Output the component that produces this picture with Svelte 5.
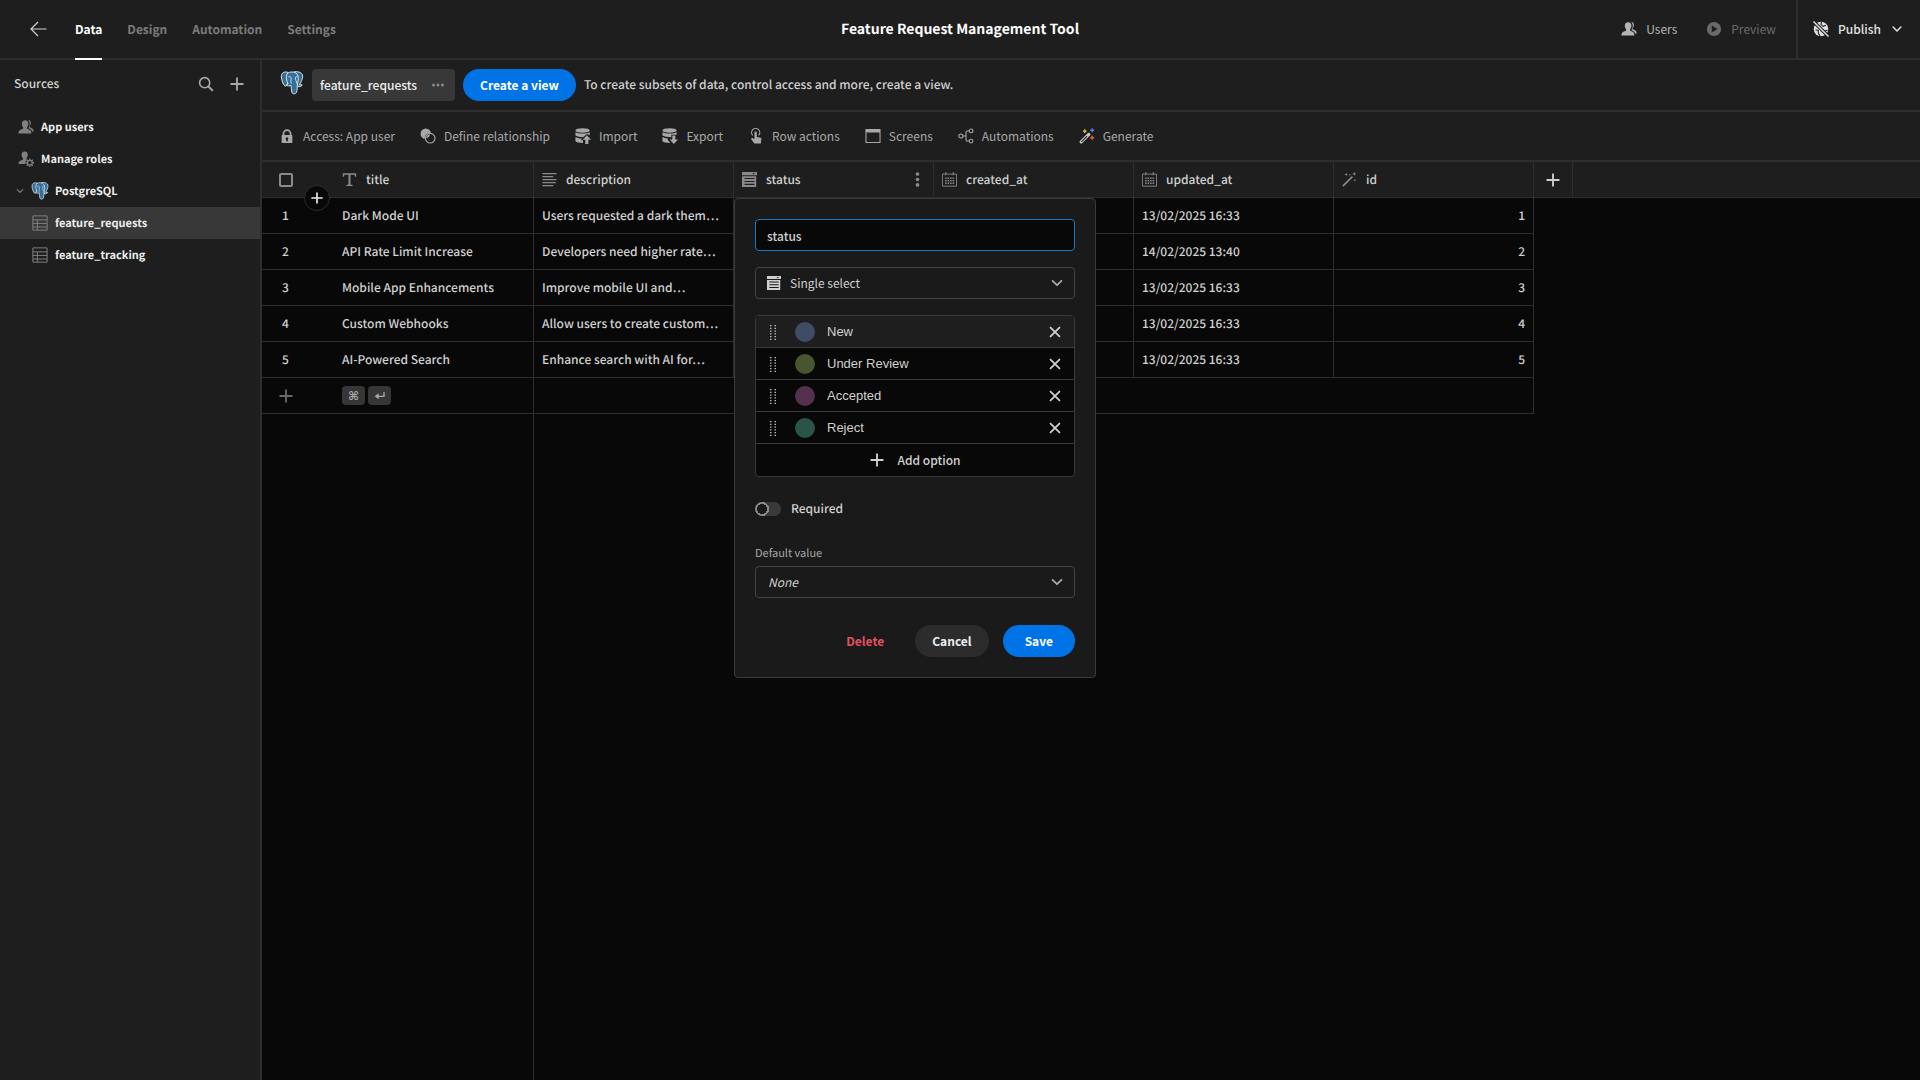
<script lang="ts">
  interface Option {
    name: string;
    color: string;
  }

  const icons: Record<string, string> = {
    back: '<path d="M2 9H17.5M9 2L2 9L9 16" fill="none" stroke="currentColor" stroke-width="1.2"/>',
    search: '<circle cx="7.5" cy="7.5" r="5.7" fill="none" stroke="currentColor" stroke-width="1.8"/><path d="M11.5 11.5L16.7 16.7" stroke="currentColor" stroke-width="2.2"/>',
    plus: '<path d="M9 2.5V15.5M2.5 9H15.5" stroke="currentColor" stroke-width="2.1" stroke-linecap="round"/>',
    close: '<path d="M4 4L14 14M14 4L4 14" stroke="currentColor" stroke-width="2" stroke-linecap="round"/>',
    chevron: '<path d="M4 6.5L9 11.5L14 6.5" fill="none" stroke="currentColor" stroke-width="2" stroke-linecap="round" stroke-linejoin="round"/>',
    dots: '<circle cx="4" cy="9" r="1.7"/><circle cx="9" cy="9" r="1.7"/><circle cx="14" cy="9" r="1.7"/>',
    dotsVertical: '<circle cx="9" cy="2.5" r="2.2"/><circle cx="9" cy="9" r="2.2"/><circle cx="9" cy="15.5" r="2.2"/>',
    users: '<path d="M8 1.3c2.3 0 3.7 1.6 3.7 4 0 1.7-.7 3-1.5 3.9v1.3c0 .4.2.7.6.8 2.5.8 4.2 1.9 4.2 4.2v.8H.5v-.8c0-2.3 2-3.4 4.5-4.2.4-.1.7-.4.7-.8V9.2C4.9 8.3 4.3 7 4.3 5.3c0-2.4 1.4-4 3.7-4z"/><path d="M11.3.9c2 .1 3.2 1.6 3.2 3.7 0 1.5-.6 2.6-1.2 3.3v1c0 .4.2.6.5.7 2.2.7 3.8 1.9 3.9 4.4h-1.9c-.5-1.8-1.9-2.8-4-3.5v-.7c.8-1 1.4-2.5 1.4-4.3 0-1.9-.7-3.5-1.9-4.6z"/>',
    roles: '<path d="M7.5.5C9.9.5 11 2.1 11 4.3c0 1.7-.6 2.9-1.4 3.7v1.3c0 .4.1.6.3.8-1.3 1.2-1.8 2.6-1.6 4.4H.5c0-2.8 1.8-3.7 4.4-4.4.4-.1.6-.4.6-.8V8C4.7 7.2 4 6 4 4.3 4 2.1 5.2.5 7.5.5z"/><circle cx="13.3" cy="13.2" r="2.7" fill="none" stroke="currentColor" stroke-width="1.4"/><path d="M13.3 8.4v2M13.3 16v2M8.5 13.2h2M16 13.2h2M9.9 9.8l1.4 1.4M15.2 15.1l1.4 1.4M9.9 16.6l1.4-1.4M15.2 11.3l1.4-1.4" stroke="currentColor" stroke-width="1.5"/>',
    table: '<path d="M1 1h16v16H1zM1 5.5h16M1 9.5h16M1 13.5h16M6 5.5V17" fill="none" stroke="currentColor" stroke-width="1.1"/>',
    lock: '<path d="M14.5 8H14V6.5a5 5 0 0 0-10 0V8h-.5a.5.5 0 0 0-.5.5v8a.5.5 0 0 0 .5.5h11a.5.5 0 0 0 .5-.5v-8a.5.5 0 0 0-.5-.5zM6 6.5a3 3 0 0 1 6 0V8H6zm4 6.7V15H8v-1.8a1.5 1.5 0 1 1 2 0z" fill-rule="evenodd"/>',
    relationship: '<circle cx="6.5" cy="6.5" r="5.9"/><circle cx="11.5" cy="11.5" r="6.2" fill="#1e1e1e"/><circle cx="11.5" cy="11.5" r="5.4" fill="none" stroke="currentColor" stroke-width="1.3"/><path d="M11.3 6.9A5.2 5.2 0 0 1 6.9 11.3A5.2 5.2 0 0 1 11.3 6.9z"/>',
    import: '<ellipse cx="8.5" cy="2.8" rx="8" ry="2.6"/><path d="M.5 4.8c3.2 2 12.8 2 16 0v3.4l-3-1.5-4.5 3.7C6 10.4 2.5 9.7.5 8.5zM.5 10.2c1.5 1 3.5 1.4 5.5 1.6l2 .2-1.7 1.7H9v3.2C5 16.9 1.6 16.2.5 15z"/><path d="M13.3 8.2l4.7 5h-3V18h-3.4v-4.8h-3z"/>',
    export: '<ellipse cx="8.5" cy="2.8" rx="8" ry="2.6"/><path d="M.5 4.8c3.2 2 12.8 2 16 0v2.7h-6v2.9C6.5 10.4 2.5 9.7.5 8.5zM.5 10.2c1.5 1 3.5 1.4 6 1.6v1.7l3 3.3C5 16.9 1.6 16.2.5 15z"/><path d="M13.3 18l4.7-5h-3V8.5h-3.4V13h-3z"/>',
    tap: '<path d="M7.3 5.2c0-1.7 2.6-1.7 2.6 0V10l4.2 1c.8.2 1.1.7 1 1.5l-.7 5H7.2L3.8 13c-.9-1.3.7-2.5 1.8-1.5l1.7 1.2z"/><path d="M5.3 8.3A4.6 4.6 0 1 1 12 8.3" fill="none" stroke="currentColor" stroke-width="1.3"/>',
    screens: '<path d="M.5 1h17v16H.5zM1.7 5v10.8h14.6V5z" fill-rule="evenodd"/>',
    automations: '<g fill="none" stroke="currentColor" stroke-width="1.2"><circle cx="3.2" cy="9" r="2.3"/><circle cx="14.7" cy="3.3" r="2.1"/><circle cx="14.7" cy="14.7" r="2.1"/><path d="M5.5 9h3M12.6 3.3h-2.1q-1.5 0-1.5 1.5v8.4q0 1.5 1.5 1.5h2.1"/></g>',
    generate: '<path d="M2.5 15.7L11 7.2" stroke="#c8c8c8" stroke-width="3.6" stroke-linecap="round"/><path d="M2.7 15.5L9 9.2" stroke="#1e1e1e" stroke-width="1.2"/><path d="M6.5 1.5v4M4.5 3.5h4" stroke="#e8c33c" stroke-width="1.5"/><path d="M14.8.3v4.4M12.6 2.5h4.4" stroke="#5c7cfa" stroke-width="1.5"/><path d="M14.8 8.8v4.4M12.6 11h4.4" stroke="#f0563a" stroke-width="1.8"/>',
    text: '<path d="M1 1.5h16v4.3h-1.3L15 3.3h-4.8v11.8l2.5.5v1.2H5.3v-1.2l2.5-.5V3.3H3l-.7 2.5H1z"/>',
    longText: '<path d="M.5 1.8h17M.5 5.4h13M.5 9h17M.5 12.6h16M.5 16.2h13" stroke="currentColor" stroke-width="1.5"/>',
    select: '<path d="M0 0h18v4H0zM12.5 1.2L14 3l1.5-1.8z" fill-rule="evenodd"/><path d="M0 5h17v13H0zM3 7.2v1.3h12V7.2zM3 10.7V12h12v-1.3zM3 14.2v1.3h12v-1.3z" fill-rule="evenodd"/>',
    calendar: '<path d="M.5 2.5h17V17H.5zM4.5 0v4M13.5 0v4" fill="none" stroke="currentColor" stroke-width="1.1"/><path d="M3.7 7.5h11M3.7 10.5h11M3.7 13.5h11" stroke="currentColor" stroke-width="1.8" stroke-dasharray="1.8 1.2"/>',
    wand: '<path d="M1 17L12.5 5.5" stroke="currentColor" stroke-width="1.9"/><path d="M5 1l.6 1.5 1.5.6-1.5.6L5 5.2l-.6-1.5-1.5-.6 1.5-.6zM14.8 0l.7 1.6 1.6.7-1.6.7-.7 1.6-.7-1.6-1.6-.7 1.6-.7zM15.5 8l.5 1.2 1.2.5-1.2.5-.5 1.2-.5-1.2-1.2-.5 1.2-.5z"/><circle cx="9.5" cy="3.3" r=".8"/>',
    play: '<path d="M9 1a8 8 0 1 0 0 16A8 8 0 0 0 9 1zM6.5 5l6.5 4-6.5 4z" fill-rule="evenodd"/>',
    globeOff: '<circle cx="9" cy="9" r="8.2"/><path d="M9.5 1L9 4l2.5 2 3-1.2M3 10l3 .5v3l2 3.5M13.5 11l3-.5" fill="none" stroke="#1e1e1e" stroke-width="1.2"/><path d="M0 0L18 18" stroke="#1e1e1e" stroke-width="3.8"/><path d="M.5.5L17.5 17.5" stroke="currentColor" stroke-width="1.6"/>',
    drag: '<path d="M6.5 1v17M11.5 1v17" stroke="currentColor" stroke-width="1.5" stroke-dasharray="1.5 1.6"/>',
    enter: '<path d="M15 3v6.5H4" fill="none" stroke="currentColor" stroke-width="2"/><path d="M1 9.5L7 5v9z"/>',
    postgres: '<g fill="#336f96" stroke="#e6edf2" stroke-width=".9" stroke-linejoin="round"><path d="M7 1.2C3.5.3.7 1.7.8 5.5c.1 2.8 1.5 7.5 3.3 8.8.9.6 1.8-.3 2.8-1.5z"/><path d="M12.5 1C15 .2 21.3.5 21.2 5.2c-.1 2.6-1.5 5.5-3.1 8l2.7.1c-.3 1.3-2.2 1.8-4 1.8z"/><path d="M6.2 3C7.5 1 9.5.8 11.6 1c3.4-.2 5.4 2.7 5.5 6.5 0 2.5-.8 4-1 5.5-.2 2.7.1 5-.7 7.2-.8 2.2-3.9 2.3-4.6.1-.6-2-.3-4.7-.8-6.5-1.5.8-3.2.7-4.6-.4 1-.3 1.7-.6 1.8-1.3C5.7 9.6 5.1 5.5 6.2 3z"/></g><path d="M7.5 5.8c1.2-.8 2.7-.4 2.7.8.1 2-.8 3.3.2 5.5M16.5 5.8c-1.2-.7-2.3-.4-2.3.6 0 2 1.2 3.1 1.3 5.6" fill="none" stroke="#e6edf2" stroke-width=".8"/>',
  };

  const tabs = ['Data', 'Design', 'Automation', 'Settings'];

  const tools = [
    { icon: 'lock', label: 'Access: App user' },
    { icon: 'relationship', label: 'Define relationship' },
    { icon: 'import', label: 'Import' },
    { icon: 'export', label: 'Export' },
    { icon: 'tap', label: 'Row actions' },
    { icon: 'screens', label: 'Screens' },
    { icon: 'automations', label: 'Automations' },
    { icon: 'generate', label: 'Generate' },
  ];

  const columns = [
    { icon: 'text', name: 'title' },
    { icon: 'longText', name: 'description' },
    { icon: 'select', name: 'status' },
    { icon: 'calendar', name: 'created_at' },
    { icon: 'calendar', name: 'updated_at' },
    { icon: 'wand', name: 'id' },
  ];

  const rows = [
    { id: 1, title: 'Dark Mode UI', description: 'Users requested a dark them…', updated: '13/02/2025 16:33' },
    { id: 2, title: 'API Rate Limit Increase', description: 'Developers need higher rate…', updated: '14/02/2025 13:40' },
    { id: 3, title: 'Mobile App Enhancements', description: 'Improve mobile UI and…', updated: '13/02/2025 16:33' },
    { id: 4, title: 'Custom Webhooks', description: 'Allow users to create custom…', updated: '13/02/2025 16:33' },
    { id: 5, title: 'AI-Powered Search', description: 'Enhance search with AI for…', updated: '13/02/2025 16:33' },
  ];

  let activeTab = $state('Data');
  let columnName = $state('status');
  let required = $state(false);
  let options: Option[] = $state([
    { name: 'New', color: '#3f4c66' },
    { name: 'Under Review', color: '#48552f' },
    { name: 'Accepted', color: '#56304f' },
    { name: 'Reject', color: '#2a5449' },
  ]);

  function addOption() {
    options.push({ name: `Option ${options.length + 1}`, color: '#3f4c66' });
  }

  function removeOption(index: number) {
    options.splice(index, 1);
  }
</script>

{#snippet icon(name: string, size = 18)}
  <svg
    width={size}
    height={size}
    viewBox={name === 'postgres' ? '0 0 22 23' : '0 0 18 18'}
    fill="currentColor"
    aria-hidden="true"
  >
    {@html icons[name]}
  </svg>
{/snippet}

<div class="builder">
  <header class="topbar">
    <div class="topbar-left">
      <button class="icon-button" aria-label="Back">{@render icon('back')}</button>
      <nav class="tabs">
        {#each tabs as tab}
          <a href="#{tab}" class:active={activeTab === tab} onclick={() => (activeTab = tab)}>{tab}</a>
        {/each}
      </nav>
    </div>
    <h1>Feature Request Management Tool</h1>
    <div class="topbar-right">
      <button class="top-action">{@render icon('users', 16)}Users</button>
      <button class="top-action dim">{@render icon('play', 16)}Preview</button>
      <button class="top-action publish">
        {@render icon('globeOff', 16)}Publish
        {@render icon('chevron', 14)}
      </button>
    </div>
  </header>

  <div class="body">
    <aside class="sidebar">
      <div class="sidebar-header">
        <h2>Sources</h2>
        <button class="icon-button" aria-label="Search">{@render icon('search', 16)}</button>
        <button class="icon-button" aria-label="Add source">{@render icon('plus', 16)}</button>
      </div>
      <nav class="sources">
        <a href="#app-users">{@render icon('users', 16)}App users</a>
        <a href="#roles">{@render icon('roles', 16)}Manage roles</a>
        <a href="#postgres" class="datasource">
          {@render icon('chevron', 10)}
          {@render icon('postgres')}
          PostgreSQL
        </a>
        <a href="#feature_requests" class="nested selected">{@render icon('table', 16)}feature_requests</a>
        <a href="#feature_tracking" class="nested">{@render icon('table', 16)}feature_tracking</a>
      </nav>
    </aside>

    <main>
      <div class="viewbar">
        {@render icon('postgres', 24)}
        <button class="view-tab">feature_requests{@render icon('dots', 16)}</button>
        <button class="button primary">Create a view</button>
        <p>To create subsets of data, control access and more, create a view.</p>
      </div>

      <div class="toolbar">
        {#each tools as tool}
          <button>{@render icon(tool.icon, 16)}{tool.label}</button>
        {/each}
      </div>

      <div class="grid">
        <table>
          <colgroup>
            <col class="col-gutter" />
            {#each columns as column (column.name)}
              <col class="col-data" />
            {/each}
            <col class="col-add" />
            <col />
          </colgroup>
          <thead>
            <tr>
              <th class="gutter">
                <input type="checkbox" aria-label="Select all rows" />
                <button class="insert-button" aria-label="Insert row">{@render icon('plus', 14)}</button>
              </th>
              {#each columns as column (column.name)}
                <th class="bordered" class:anchor={column.name === 'status'}>
                  <div class="heading">
                    {@render icon(column.icon, 15)}
                    <span>{column.name}</span>
                    {#if column.name === 'status'}
                      <button class="icon-button" aria-label="Column menu">{@render icon('dotsVertical', 15)}</button>
                    {/if}
                  </div>
                  {#if column.name === 'status'}
                    <form class="popover" onsubmit={(e) => e.preventDefault()}>
                      <input class="field name-field" aria-label="Column name" bind:value={columnName} />
                      <div class="picker">
                        {@render icon('select', 14)}
                        <select class="field with-icon" aria-label="Column type">
                          <option>Single select</option>
                        </select>
                        <span class="picker-chevron">{@render icon('chevron', 16)}</span>
                      </div>

                      <div class="options">
                        {#each options as option, i}
                          <div class="option">
                            <span class="handle">{@render icon('drag', 16)}</span>
                            <span class="swatch" style="background: {option.color}"></span>
                            <input aria-label="Option name" bind:value={option.name} />
                            <button type="button" class="icon-button" aria-label="Remove option" onclick={() => removeOption(i)}>
                              {@render icon('close', 16)}
                            </button>
                          </div>
                        {/each}
                        <button type="button" class="add-option" onclick={addOption}>
                          {@render icon('plus', 16)}Add option
                        </button>
                      </div>

                      <label class="switch">
                        <input type="checkbox" bind:checked={required} />
                        Required
                      </label>

                      <label class="default-label" for="default-value">Default value</label>
                      <div class="picker">
                        <select id="default-value" class="field placeholder">
                          <option>None</option>
                        </select>
                        <span class="picker-chevron">{@render icon('chevron', 16)}</span>
                      </div>

                      <div class="popover-actions">
                        <button type="button" class="button danger">Delete</button>
                        <button type="button" class="button secondary">Cancel</button>
                        <button class="button primary save">Save</button>
                      </div>
                    </form>
                  {/if}
                </th>
              {/each}
              <th class="bordered add-column">
                <button class="icon-button" aria-label="Add column">{@render icon('plus', 16)}</button>
              </th>
              <th></th>
            </tr>
          </thead>
          <tbody>
            {#each rows as row (row.id)}
              <tr>
                <td class="gutter">{row.id}</td>
                <td class="bordered">{row.title}</td>
                <td class="bordered">{row.description}</td>
                <td class="bordered"></td>
                <td class="bordered"></td>
                <td class="bordered">{row.updated}</td>
                <td class="bordered number">{row.id}</td>
              </tr>
            {/each}
            <tr class="new-row">
              <td class="gutter">
                <button class="icon-button" aria-label="Add row">{@render icon('plus', 16)}</button>
              </td>
              <td class="bordered">
                <span class="keys"><kbd>⌘</kbd><kbd>{@render icon('enter', 12)}</kbd></span>
              </td>
              <td></td>
              <td></td>
              <td></td>
              <td></td>
              <td class="bordered"></td>
            </tr>
          </tbody>
        </table>
      </div>
    </main>
  </div>
</div>

<style>
  :global(body) {
    background: #080808;
  }

  .builder {
    --surface: #1e1e1e;
    --background: #080808;
    --line: #2e2e2e;
    --text: #d0d0d0;
    --text-light: #a8a8a8;
    --primary: #0073e6;
    min-height: 100vh;
    display: flex;
    flex-direction: column;
    background: var(--background);
    color: var(--text);
    font-family: 'Noto Sans CJK SC', 'Noto Sans', sans-serif;
    font-size: 12px;
    line-height: 20px;
    text-rendering: geometricPrecision;
  }

  button,
  input,
  select {
    font: inherit;
    color: inherit;
    box-sizing: border-box;
  }

  button {
    display: flex;
    align-items: center;
    border: none;
    background: none;
    padding: 0;
    cursor: pointer;
    white-space: nowrap;
  }

  a {
    color: inherit;
    text-decoration: none;
  }

  svg {
    flex-shrink: 0;
    display: block;
  }

  h1,
  h2,
  p {
    margin: 0;
    font-size: inherit;
    font-weight: 500;
  }

  /* Top bar */
  .topbar {
    display: grid;
    grid-template-columns: 1fr auto 1fr;
    height: 58px;
    background: var(--surface);
    border-bottom: 2px solid var(--line);
  }

  .topbar h1 {
    align-self: center;
    color: #fff;
    font-size: 14px;
    font-weight: 700;
  }

  .topbar-left {
    display: flex;
    align-items: center;
    gap: 28px;
    padding-left: 29px;
  }

  .tabs {
    display: flex;
    align-self: stretch;
    gap: 25px;
    margin-bottom: -2px;
  }

  .tabs a {
    display: flex;
    align-items: center;
    padding-top: 2px;
    border-bottom: 2px solid transparent;
    color: #7a7a7a;
    font-weight: 700;
  }

  .tabs a.active {
    color: #fff;
    border-color: #fff;
  }

  .topbar-right {
    display: flex;
    justify-content: flex-end;
    gap: 29px;
  }

  .top-action {
    gap: 9px;
    color: #b4b4b4;
  }

  .top-action.dim {
    color: #6a6a6a;
  }

  .top-action.publish {
    border-left: 2px solid var(--line);
    padding: 0 16px 0 15px;
    margin-left: -9px;
    color: #e0e0e0;
    font-weight: 500;
  }

  /* Sidebar */
  .body {
    flex: 1;
    display: flex;
  }

  .sidebar {
    width: 260px;
    flex-shrink: 0;
    background: var(--surface);
    border-right: 2px solid var(--line);
  }

  .sidebar-header {
    display: flex;
    align-items: center;
    gap: 15px;
    height: 48px;
    padding: 0 15px 0 14px;
  }

  .sidebar-header h2 {
    flex: 1;
  }

  .sidebar-header button {
    color: var(--text-light);
  }

  .sources {
    padding-top: 3px;
  }

  .sources a {
    display: flex;
    align-items: center;
    gap: 7px;
    height: 32px;
    padding-left: 18px;
    color: #eee;
    font-size: 11px;
    font-weight: 700;
  }

  .sources svg {
    color: #808080;
  }

  .sources .datasource {
    padding-left: 15px;
    gap: 6px;
  }

  .sources .nested {
    padding-left: 32px;
  }

  .sources .selected {
    background: #383838;
  }

  /* View bar */
  main {
    flex: 1;
    min-width: 0;
    display: flex;
    flex-direction: column;
  }

  .viewbar,
  .toolbar {
    display: flex;
    align-items: center;
    background: var(--surface);
    border-bottom: 2px solid var(--line);
  }

  .viewbar {
    gap: 8px;
    height: 50px;
    padding-left: 18px;
  }

  .viewbar > svg {
    margin-bottom: 4px;
  }

  .view-tab {
    gap: 13px;
    height: 32px;
    padding: 0 9px 0 8px;
    border-radius: 4px;
    background: #383838;
    color: #eee;
    font-weight: 500;
  }

  .view-tab svg {
    color: #8a8a8a;
  }

  .button {
    justify-content: center;
    height: 32px;
    padding: 0 17px;
    border-radius: 16px;
    font-weight: 700;
  }

  .primary {
    background: var(--primary);
    color: #fff;
  }

  .toolbar {
    gap: 25px;
    height: 48px;
    padding-left: 17px;
    color: var(--text-light);
  }

  .toolbar button {
    gap: 8px;
  }

  /* Grid */
  .grid {
    flex: 1;
    background: linear-gradient(var(--line), var(--line)) 271px 0 / 1px 100% no-repeat;
  }

  table {
    width: 100%;
    table-layout: fixed;
    border-collapse: separate;
    border-spacing: 0;
    font-weight: 500;
  }

  .col-gutter {
    width: 72px;
  }

  .col-data {
    width: 200px;
  }

  .col-add {
    width: 39px;
  }

  th,
  td {
    box-sizing: border-box;
    height: 36px;
    padding: 0 8px;
    border-bottom: 1px solid var(--line);
    text-align: left;
    font-weight: 500;
    white-space: nowrap;
  }

  th {
    background: var(--surface);
  }

  td {
    overflow: hidden;
  }

  .bordered {
    border-right: 1px solid var(--line);
  }

  .gutter {
    position: relative;
    padding: 0 17px;
  }

  td.gutter {
    padding-left: 20px;
  }

  .gutter > input {
    appearance: none;
    display: block;
    width: 14px;
    height: 14px;
    margin: 0;
    border: 2px solid #8a8a8a;
    border-radius: 2px;
  }

  .insert-button {
    position: absolute;
    right: 4px;
    bottom: -14px;
    justify-content: center;
    width: 26px;
    height: 26px;
    border: 1px solid var(--line);
    border-radius: 50%;
    background: var(--background);
    color: #eee;
  }

  .heading {
    display: flex;
    align-items: center;
    gap: 9px;
  }

  .heading span {
    flex: 1;
  }

  .heading > svg,
  .heading .icon-button {
    color: #8a8a8a;
  }

  .add-column {
    padding: 0 11px;
  }

  .number {
    text-align: right;
  }

  .new-row .icon-button {
    color: #6a6a6a;
  }

  .new-row td.gutter {
    padding-left: 16px;
  }

  .keys {
    display: flex;
    gap: 3px;
  }

  kbd {
    display: flex;
    align-items: center;
    justify-content: center;
    width: 23px;
    height: 19px;
    border-radius: 4px;
    background: #363636;
    color: #a8a8a8;
    font-family: 'DejaVu Sans', sans-serif;
    font-size: 12px;
    font-weight: 700;
  }

  /* Column editor */
  .anchor {
    position: relative;
  }

  .popover {
    position: absolute;
    top: 100%;
    left: 0;
    margin-top: 1px;
    z-index: 1;
    display: flex;
    flex-direction: column;
    width: 320px;
    padding: 20px;
    border: 1px solid #3a3a3a;
    border-radius: 4px;
    background: #1a1a1a;
  }

  .field {
    width: 100%;
    height: 32px;
    padding: 0 12px;
    border: 1px solid #444;
    border-radius: 4px;
    background: transparent;
    appearance: none;
    outline: none;
  }

  .name-field {
    padding: 0 11px;
    border-color: #1a78c2;
    background: var(--background);
    margin-bottom: 16px;
  }

  .picker {
    display: grid;
    align-items: center;
  }

  .picker > :global(*) {
    grid-area: 1 / 1;
  }

  .picker > svg {
    margin-left: 12px;
  }

  .picker-chevron {
    justify-self: end;
    margin-right: 10px;
    color: #a8a8a8;
    pointer-events: none;
  }

  .with-icon {
    padding-left: 34px;
    font-weight: 400;
  }

  .placeholder {
    font-style: italic;
    font-weight: 400;
  }

  .options {
    margin-top: 16px;
    border: 1px solid #3a3a3a;
    border-radius: 4px;
    background: var(--background);
    overflow: hidden;
  }

  .option {
    display: flex;
    align-items: center;
    box-sizing: border-box;
    height: 32px;
    padding: 0 11px 0 9px;
    border-bottom: 1px solid #3a3a3a;
  }

  .option:first-child {
    background: #1e1e1e;
  }

  .swatch {
    width: 20px;
    height: 20px;
    margin: 0 12px 0 14px;
    border-radius: 50%;
  }

  .option input {
    flex: 1;
    min-width: 0;
    padding: 0;
    border: none;
    background: none;
    outline: none;
    font-family: 'Liberation Sans', Arial, sans-serif;
    font-size: 13px;
  }

  .add-option {
    justify-content: center;
    gap: 12px;
    width: 100%;
    height: 32px;
  }

  .switch {
    display: flex;
    align-items: center;
    gap: 10px;
    margin-top: 22px;
  }

  .switch input {
    appearance: none;
    width: 26px;
    height: 14px;
    margin: 0;
    border-radius: 7px;
    background: radial-gradient(circle at 7px 7px, #1a1a1a 5px, #8a8a8a 5px, #8a8a8a 7px, #3a3a3a 7px);
  }

  .switch input:checked {
    background: radial-gradient(circle at 19px 7px, #1a1a1a 5px, #8a8a8a 5px, #8a8a8a 7px, var(--primary) 7px);
  }

  .default-label {
    margin-top: 24px;
    margin-bottom: 3px;
    color: var(--text-light);
    font-size: 11px;
    font-weight: 400;
  }

  .popover-actions {
    display: flex;
    justify-content: flex-end;
    gap: 14px;
    margin-top: 27px;
  }

  .danger {
    color: #e34f63;
  }

  .secondary {
    background: #2c2c2c;
    color: #eee;
  }

  .save {
    padding: 0 22px;
  }
</style>
